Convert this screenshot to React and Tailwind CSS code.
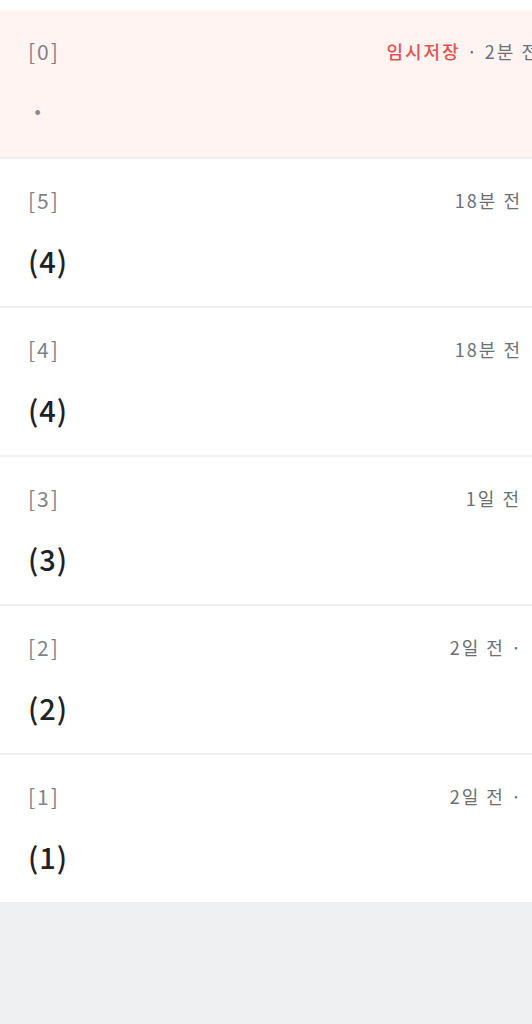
import React from 'react';

const items = [
  { id: 0, meta: '2분 전', temp: true, body: '·', pink: true, shift: '-mr-[8px]' },
  { id: 5, meta: '18분 전', body: '(4)', shift: 'mr-[10px]' },
  { id: 4, meta: '18분 전', body: '(4)', shift: 'mr-[10px]' },
  { id: 3, meta: '1일 전', body: '(3)', shift: 'mr-[11px]' },
  { id: 2, meta: '2일 전 ·', body: '(2)', shift: 'mr-[9px]' },
  { id: 1, meta: '2일 전 ·', body: '(1)', shift: 'mr-[9px]' },
];

function Row({ item }) {
  return (
    <div className={`h-[149px] border-b-2 border-[#eeeff0] pl-[28px] pt-[27px] ${item.pink ? 'bg-[#fff4f2]' : 'bg-white'}`}>
      <div className="flex items-center justify-between h-[28px]">
        <span className="text-[21px] leading-[28px] text-[#7f8388] tracking-[2px]">[{item.id}]</span>
        <span className={`whitespace-nowrap text-[18px] leading-[28px] text-[#6c7075] tracking-[2px] ${item.shift}`}>
          {item.temp && <span className="text-[#e8514f] font-medium">임시저장</span>}
          {item.temp && ' · '}
          {item.meta}
        </span>
      </div>
      <div className={`mt-[26px] leading-[40px] ${item.pink ? 'text-[26px] font-bold text-[#8a8d91] pl-[2px]' : 'text-[29px] font-medium text-[#1f2124] tracking-[1px]'}`}>
        {item.body}
      </div>
    </div>
  );
}

export default function App() {
  return (
    <div className="w-[532px] h-[1024px] overflow-hidden bg-[#eff0f1]" style={{ fontFamily: '"Noto Sans CJK KR", "Noto Sans", sans-serif' }}>
      <div className="h-[10px] bg-white" />
      {items.map(item => (
        <Row key={item.id} item={item} />
      ))}
    </div>
  );
}
